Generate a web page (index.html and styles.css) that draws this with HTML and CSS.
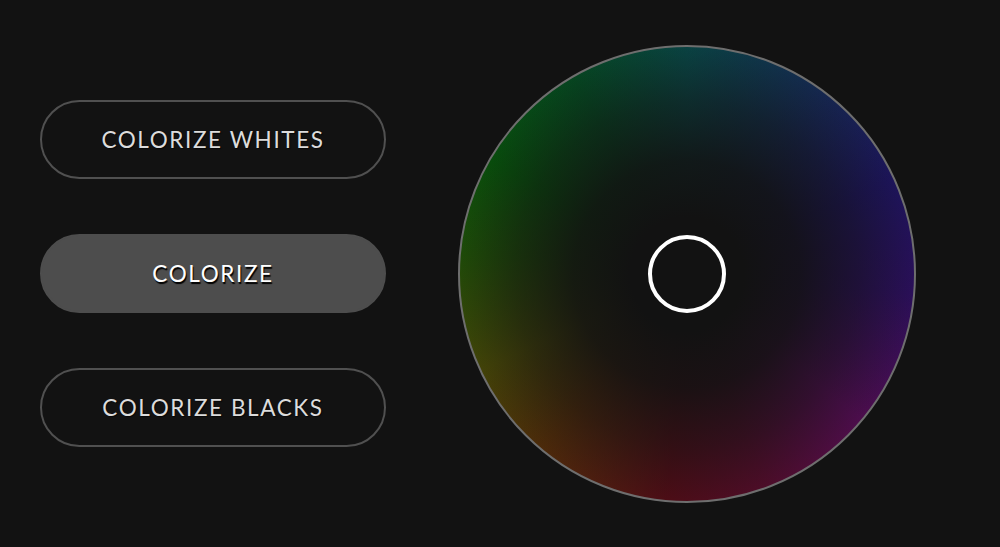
FILE: index.html
```html
<!DOCTYPE html>
<html>
<head>
<meta charset="utf-8">
<link rel="stylesheet" href="styles.css">
</head>
<body>
<div class="page">
  <div class="buttons">
    <div class="btn">COLORIZE WHITES</div>
    <div class="btn active">COLORIZE</div>
    <div class="btn">COLORIZE BLACKS</div>
  </div>
  <div class="wheel">
    <div class="shade"></div>
    <div class="handle"></div>
  </div>
</div>
</body>
</html>
```
FILE: styles.css
```css
html, body {
  margin: 0;
  padding: 0;
  background: #121212;
}
.page {
  height: 547px;
  display: flex;
  align-items: center;
  padding-left: 40px;
  gap: 72px;
  box-sizing: border-box;
}
.buttons {
  display: flex;
  flex-direction: column;
  gap: 55px;
  margin-top: -1px;
}
.btn {
  width: 346px;
  height: 79px;
  box-sizing: border-box;
  border: 2px solid #505050;
  border-radius: 40px;
  display: flex;
  align-items: center;
  justify-content: center;
  font-family: "Lato", "Open Sans", sans-serif;
  font-size: 22.5px;
  letter-spacing: 1.6px;
  color: #dcdcdc;
  text-shadow: 1px 1px 1px rgba(0,0,0,0.6);
}
.btn.active {
  background: #4d4d4d;
  border-color: #4d4d4d;
  color: #ffffff;
  text-shadow: 1px 2px 1px #000;
}
.wheel {
  width: 458px;
  height: 458px;
  border-radius: 50%;
  box-sizing: border-box;
  border: 2px solid #6e6e6e;
  background: conic-gradient(from 0deg,
    #0a4242 0deg,
    #16244f 40deg,
    #1c1458 65deg,
    #2a0f58 95deg,
    #4c0d4c 130deg,
    #4c0d28 160deg,
    #4c0d16 185deg,
    #4c2a0a 220deg,
    #424208 245deg,
    #1e4a08 275deg,
    #084c0c 300deg,
    #064420 330deg,
    #0a4242 360deg);
  display: grid;
  place-items: center;
  margin-top: 1px;
}
.shade, .handle {
  grid-area: 1 / 1;
}
.shade {
  width: 100%;
  height: 100%;
  border-radius: 50%;
  background: radial-gradient(circle closest-side,
    #121212 0%,
    #121212 25%,
    rgba(18,18,18,0.85) 50%,
    rgba(18,18,18,0.45) 76%,
    rgba(18,18,18,0) 100%);
}
.handle {
  width: 78px;
  height: 78px;
  box-sizing: border-box;
  border: 4px solid #ffffff;
  border-radius: 50%;
}
```
